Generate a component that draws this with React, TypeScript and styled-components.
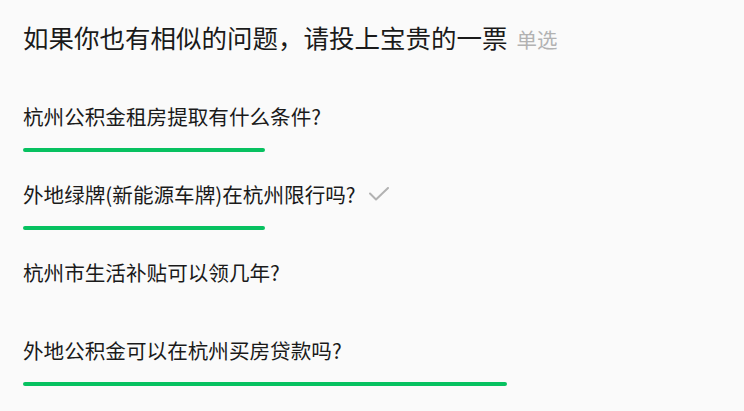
import React from 'react';
import styled, { createGlobalStyle } from 'styled-components';

const GlobalStyle = createGlobalStyle`
  html, body {
    margin: 0;
    padding: 0;
    background: #fafafa;
  }
  body {
    font-family: "Noto Sans CJK SC", "Noto Sans", sans-serif;
    color: #1a1a1a;
  }
`;

const Poll = styled.section`
  padding: 19px 23px 0;
  display: flex;
  flex-flow: column nowrap;
`;

const PollHeader = styled.div`
  display: flex;
  flex-flow: row nowrap;
  align-items: baseline;
  gap: 9px;
  margin-bottom: 44px;
`;

const PollTitle = styled.h2`
  margin: 0;
  font-size: 25.5px;
  line-height: 36px;
  font-weight: 400;
  color: #1a1a1a;
`;

const PollMode = styled.span`
  font-size: 20.5px;
  line-height: 36px;
  color: #b2b2b2;
`;

const OptionList = styled.ul`
  list-style: none;
  margin: 0;
  padding: 0;
  display: flex;
  flex-flow: column nowrap;
  gap: 27px;
`;

const OptionItem = styled.li`
  display: flex;
  flex-flow: column nowrap;
  align-items: flex-start;
  gap: 17px;
`;

const OptionLabel = styled.div`
  display: flex;
  flex-flow: row nowrap;
  align-items: center;
  gap: 13px;
  font-size: 20.6px;
  line-height: 30px;
  color: #1a1a1a;
`;

const CheckMark = styled.svg`
  width: 20px;
  height: 14px;
  flex-shrink: 0;
`;

const VoteBar = styled.div`
  height: 4px;
  border-radius: 2px;
  background: #07c160;
`;

interface PollOption {
  label: string;
  votes: number;
  chosen?: boolean;
}

const options: PollOption[] = [
  { label: '杭州公积金租房提取有什么条件?', votes: 1 },
  { label: '外地绿牌(新能源车牌)在杭州限行吗?', votes: 1, chosen: true },
  { label: '杭州市生活补贴可以领几年?', votes: 0 },
  { label: '外地公积金可以在杭州买房贷款吗?', votes: 2 }
];

const MAX_BAR = 484;

export default function App() {
  const maxVotes = Math.max(...options.map((o) => o.votes));

  return (
    <>
      <GlobalStyle />
      <Poll>
        <PollHeader>
          <PollTitle>如果你也有相似的问题，请投上宝贵的一票</PollTitle>
          <PollMode>单选</PollMode>
        </PollHeader>
        <OptionList>
          {options.map((o) => (
            <OptionItem key={o.label}>
              <OptionLabel>
                <span>{o.label}</span>
                {o.chosen && (
                  <CheckMark viewBox='0 0 20 14' fill='none'>
                    <path
                      d='M1 6.5 L7 12.5 L19 1'
                      stroke='#b2b2b2'
                      strokeWidth='2'
                      strokeLinecap='round'
                      strokeLinejoin='round'
                    />
                  </CheckMark>
                )}
              </OptionLabel>
              <VoteBar style={{ width: `${(o.votes / maxVotes) * MAX_BAR}px` }} />
            </OptionItem>
          ))}
        </OptionList>
      </Poll>
    </>
  );
}
